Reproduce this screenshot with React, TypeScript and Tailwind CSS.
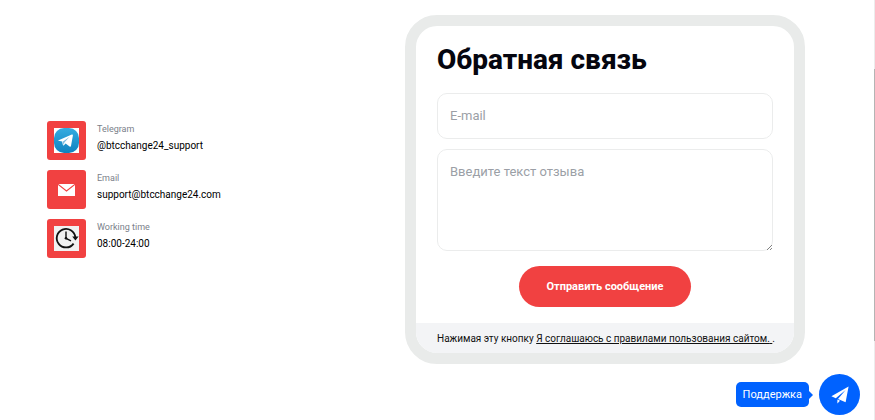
import React from 'react';

interface ContactItem {
  label: string;
  value: string;
  icon: React.ReactNode;
}

const TelegramIcon = () => (
  <span className="flex w-[25px] h-[25px] bg-white">
    <svg viewBox="0 0 25 25" className="w-[25px] h-[25px]">
      <defs>
        <linearGradient id="telegram" x1="0" y1="0" x2="0" y2="1">
          <stop offset="0" stopColor="#35ace0" />
          <stop offset="1" stopColor="#0f82c0" />
        </linearGradient>
      </defs>
      <rect width="25" height="25" rx="10" fill="url(#telegram)" />
      <path d="M4.6 12.2 17.8 6.6c.8-.3 1.2.1 1.1.9L17 17.9c-.2.8-.7 1-1.4.6l-4-2.9-1.9 1.8c-.4.4-.7.2-.8-.3l-.8-3.5-3.5-.9c-.5-.1-.5-.4 0-.5Z" fill="#fff" />
      <path d="m8.6 13.8 7-5-5.2 5.6-.7 2.6Z" fill="#7fbde0" />
    </svg>
  </span>
);

const MailIcon = () => (
  <svg viewBox="0 0 17 12" className="w-[17px] h-3">
    <rect width="17" height="12" fill="#fff" />
    <path d="M0 .3 8.5 7 17 .3" fill="none" stroke="#f14141" strokeWidth="1.1" />
  </svg>
);

const ClockIcon = () => (
  <span className="flex w-[25px] h-[25px] bg-[#f1f1f1]">
    <svg viewBox="0 0 25 25" className="w-[25px] h-[25px]" fill="none" stroke="#111">
      <path d="M21.3 11.2A9.3 9.3 0 1 0 19.6 17.6" strokeWidth="1.8" />
      <path d="M12 5.5v6.8" strokeWidth="1.4" />
      <path d="m12 12.3 5 2.5" strokeWidth="1.4" />
      <circle cx="12" cy="12.3" r="1.3" fill="#111" stroke="none" />
      <path d="M18.2 10.6h6.4l-3.2 4Z" fill="#111" stroke="none" />
    </svg>
  </span>
);

const contacts: ContactItem[] = [
  { label: 'Telegram', value: '@btcchange24_support', icon: <TelegramIcon /> },
  { label: 'Email', value: 'support@btcchange24.com', icon: <MailIcon /> },
  { label: 'Working time', value: '08:00-24:00', icon: <ClockIcon /> },
];

const Contacts: React.FC = () => {
  return (
    <ul className="flex-1 flex flex-col gap-2.5">
      {contacts.map((item) => (
        <li key={item.label} className="flex items-start gap-[11px]">
          <div className="w-[39px] h-[39px] rounded-[3px] bg-[#f14141] flex items-center justify-center">{item.icon}</div>
          <div>
            <p className="text-[9px] leading-4 text-[#7b7f8a]">{item.label}</p>
            <p className="text-[10px] leading-[18px] text-black">{item.value}</p>
          </div>
        </li>
      ))}
    </ul>
  );
};

const FeedbackForm: React.FC = () => {
  return (
    <form
      className="w-full max-w-[400px] rounded-[32px] border-[11px] border-[#e9ebea] bg-white overflow-hidden"
      onSubmit={(e) => e.preventDefault()}
    >
      <div className="flex flex-col px-[21px] pt-4 pb-4">
        <h1 className="text-[28px] leading-9 font-extrabold text-[#05060f]">Обратная связь</h1>
        <input
          type="email"
          aria-label="E-mail"
          placeholder="E-mail"
          className="mt-[15px] w-full h-[46px] px-3 pb-0.5 rounded-[10px] border border-[#ebecec] text-[13px] placeholder:text-[#9b9fa6] outline-none"
        />
        <div className="relative mt-2.5 flex">
          <textarea
            aria-label="Введите текст отзыва"
            placeholder="Введите текст отзыва"
            className="w-full h-[102px] px-3 py-3 rounded-[10px] border border-[#ebecec] text-[13px] leading-5 placeholder:text-[#9b9fa6] outline-none resize-none"
          />
          <svg viewBox="0 0 5 5" className="absolute bottom-px right-px w-[5px] h-[5px]" stroke="#666" strokeWidth="0.8">
            <path d="M0 5 5 0M3 5 5 3" />
          </svg>
        </div>
        <button
          type="submit"
          className="mt-[15px] self-center w-[172px] h-[41px] pt-0.5 rounded-full bg-[#f14141] text-[11px] font-bold text-white"
        >
          Отправить сообщение
        </button>
      </div>
      <p className="h-[30px] px-[21px] bg-[#f3f4f6] text-[10px] leading-8 text-[#111] whitespace-nowrap">
        Нажимая эту кнопку{' '}
        <a href="#rules" className="underline">
          Я соглашаюсь с правилами пользования сайтом.{' '}
        </a>
        .
      </p>
    </form>
  );
};

const SupportButton: React.FC = () => {
  return (
    <div className="fixed bottom-[5px] right-[15px] flex items-center">
      <span className="h-[25px] px-[7px] rounded-[5px] bg-[#0062ff] text-[11px] leading-[25px] text-white">Поддержка</span>
      <svg viewBox="0 0 4 8" className="w-1 h-2 mr-1.5">
        <path d="M0 0 4 4 0 8Z" fill="#0062ff" />
      </svg>
      <button type="button" aria-label="Поддержка" className="w-[41px] h-[41px] rounded-full bg-[#0062ff] flex items-center justify-center">
        <svg viewBox="0 0 18 18" className="w-[18px] h-[18px]">
          <path d="M17.6.4.4 10.2l4.4 2L14.6 4 7 12.9l7.6 3.3Z" fill="#fff" />
          <path d="M6.4 13.5v4l2.6-2.8Z" fill="#fff" />
        </svg>
      </button>
    </div>
  );
};

const App: React.FC = () => {
  return (
    <div className="min-h-screen bg-white font-[Roboto,sans-serif]">
      <main className="flex items-center gap-6 pt-[15px] pl-[47px] pr-[70px]">
        <Contacts />
        <FeedbackForm />
      </main>
      <SupportButton />
      <div className="fixed inset-y-0 right-0 w-px pt-[69px] bg-[#ececec]">
        <div className="h-[272px] bg-[#b4b4b4]" />
      </div>
    </div>
  );
};

export default App;
